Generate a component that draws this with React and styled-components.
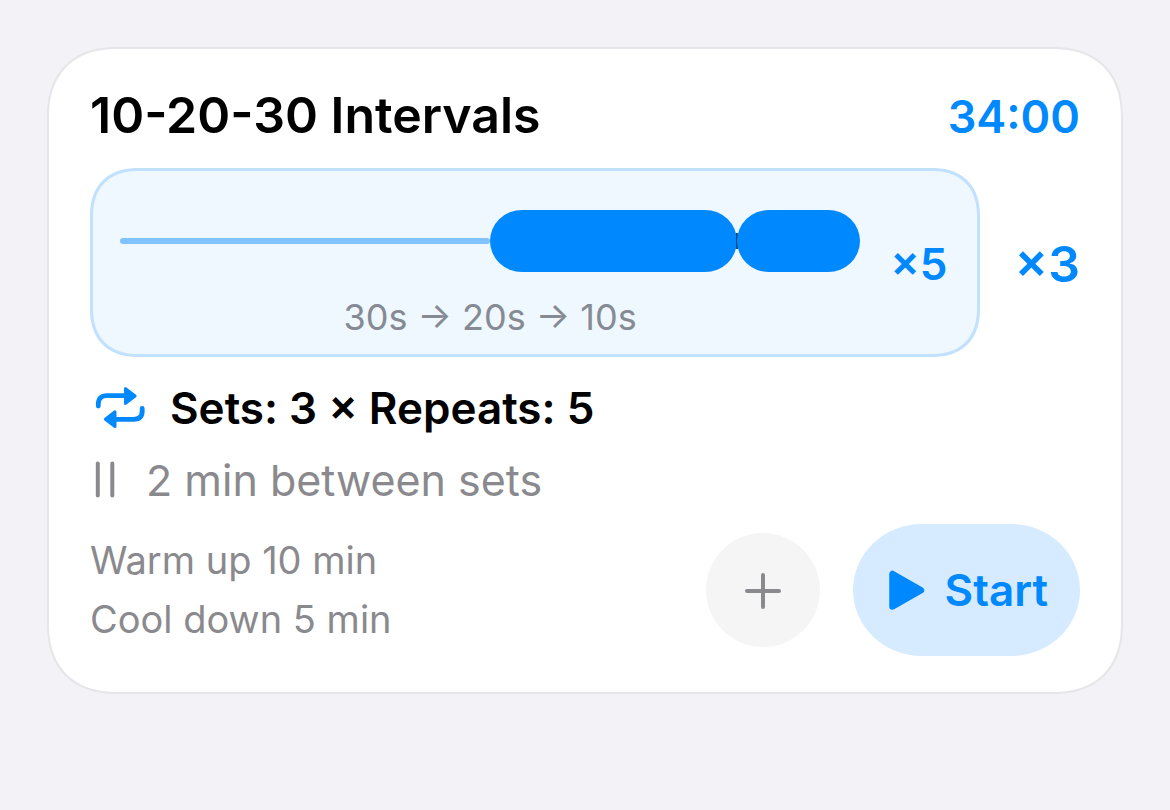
import React from "react";
import styled, { createGlobalStyle } from "styled-components";

const blue = "#0088ff";
const gray = "#8a8a8e";

const GlobalStyle = createGlobalStyle`
  *, *::before, *::after { box-sizing: border-box; }
  body {
    margin: 0;
    background: #f2f2f7;
    font-family: Inter, "Liberation Sans", sans-serif;
    color: #000;
  }
`;

const Page = styled.main`
  padding: 47px;
`;

const Card = styled.article`
  display: flex;
  flex-direction: column;
  padding: 34px 41px 36px;
  background: #fff;
  border: 2px solid #e6e6ea;
  border-radius: 70px;
  corner-shape: superellipse(1.2);
`;

const Header = styled.header`
  display: flex;
  justify-content: space-between;
  align-items: baseline;
  line-height: 64px;
`;

const Title = styled.h1`
  margin: 0;
  font-size: 50px;
  font-weight: 600;
`;

const Duration = styled.time`
  color: ${blue};
  font-size: 45px;
  font-weight: 600;
`;

const SetRow = styled.section`
  display: flex;
  align-items: center;
  gap: 35px;
  margin-top: 19px;
`;

const Panel = styled.div`
  flex: 1;
  display: flex;
  align-items: center;
  gap: 30px;
  padding: 0 29px 0 27px;
  background: #eff7ff;
  border: 3px solid #c2e1ff;
  border-radius: 48px;
  corner-shape: superellipse(1.2);
`;

const Graph = styled.div`
  flex: 1;
  display: flex;
  flex-direction: column;
  gap: 24px;
  padding: 39px 0 16px;
`;

const Bars = styled.div`
  display: flex;
  align-items: center;
  height: 62px;
`;

const RestLine = styled.div`
  flex: ${(p) => p.$share};
  height: 6px;
  border-radius: 3px;
  background: #80c3ff;
`;

const WorkBar = styled.div`
  flex: ${(p) => p.$share};
  height: 62px;
  border-radius: 32px / 31px;
  background: ${blue};
`;

const Divider = styled.div`
  width: 2px;
  height: 16px;
  margin: 0 -1px;
  background: #124a7d;
`;

const Caption = styled.p`
  margin: 0;
  color: #868a93;
  font-size: 36px;
  line-height: 42px;
  text-align: center;
`;

const Multiplier = styled.span`
  padding-top: 2px;
  color: ${blue};
  font-size: ${(p) => (p.$large ? 50 : 44)}px;
  font-weight: 600;
  line-height: 56px;
`;

const Details = styled.div`
  display: flex;
  flex-direction: column;
  gap: 16px;
  margin-top: 23px;
`;

const Detail = styled.p`
  display: flex;
  align-items: center;
  gap: ${(p) => (p.$muted ? 26 : 20)}px;
  margin: 0;
  font-size: ${(p) => (p.$muted ? 43 : 44)}px;
  line-height: 56px;
  font-weight: ${(p) => (p.$muted ? 400 : 600)};
  color: ${(p) => (p.$muted ? gray : "#000")};
`;

const Footer = styled.footer`
  display: flex;
  align-items: center;
  gap: 33px;
  margin-top: 16px;
`;

const Notes = styled.div`
  flex: 1;
  display: flex;
  flex-direction: column;
  gap: 12px;
  color: ${gray};
  font-size: 38px;
  line-height: 47px;
`;

const Note = styled.p`
  margin: 0;
`;

const Button = styled.button`
  display: flex;
  align-items: center;
  justify-content: center;
  border: 0;
  font: inherit;
  cursor: pointer;
`;

const AddButton = styled(Button)`
  width: 114px;
  height: 114px;
  padding: 0;
  border-radius: 50%;
  background: #f5f5f5;
`;

const StartButton = styled(Button)`
  height: 132px;
  gap: 20px;
  padding: 0 32px 0 36px;
  border-radius: 69px / 66px;
  background: #d6ebff;
  color: ${blue};
  font-size: 44px;
  font-weight: 600;
`;

const RepeatIcon = () => (
  <svg width="60" height="56" viewBox="0 0 60 56" aria-hidden="true">
    <g fill="none" stroke={blue} strokeWidth="4.8" strokeLinecap="round">
      <path d="M8.300 26v-2c0-5.500 3.200-8.300 8.600-8.300H36" />
      <path d="M52.200 28.500v2.500c0 5.500-3.200 8.300-8.600 8.300H24" />
    </g>
    <g fill={blue} stroke={blue} strokeWidth="3" strokeLinejoin="round">
      <path d="M35.500 8.600v14.800l9.600-7.400z" />
      <path d="M25 31.800v14.800l-9.600-7.400z" />
    </g>
  </svg>
);

const PauseIcon = () => (
  <svg width="30" height="56" viewBox="0 0 30 56" aria-hidden="true">
    <path d="M7.800 11.500v32M22.300 11.500v32" stroke={gray} strokeWidth="4" strokeLinecap="round" />
  </svg>
);

const PlusIcon = () => (
  <svg width="38" height="38" viewBox="0 0 38 38" aria-hidden="true">
    <path d="M3 20h32M19 4v32" stroke={gray} strokeWidth="4" strokeLinecap="round" />
  </svg>
);

const PlayIcon = () => (
  <svg width="36" height="40" viewBox="0 0 36 40" aria-hidden="true">
    <path
      d="M3.500 4v32.500L32 20.250z"
      fill={blue}
      stroke={blue}
      strokeWidth="6.500"
      strokeLinejoin="round"
    />
  </svg>
);

export default function App() {
  return (
    <>
      <GlobalStyle />
      <Page>
        <Card>
          <Header>
            <Title>10-20-30 Intervals</Title>
            <Duration>34:00</Duration>
          </Header>
          <SetRow>
            <Panel>
              <Graph>
                <Bars>
                  <RestLine $share={3} />
                  <WorkBar $share={2} />
                  <Divider />
                  <WorkBar $share={1} />
                </Bars>
                <Caption>30s → 20s → 10s</Caption>
              </Graph>
              <Multiplier>×5</Multiplier>
            </Panel>
            <Multiplier $large>×3</Multiplier>
          </SetRow>
          <Details>
            <Detail>
              <RepeatIcon />
              Sets: 3 × Repeats: 5
            </Detail>
            <Detail $muted>
              <PauseIcon />2 min between sets
            </Detail>
          </Details>
          <Footer>
            <Notes>
              <Note>Warm up 10 min</Note>
              <Note>Cool down 5 min</Note>
            </Notes>
            <AddButton type="button" aria-label="Add">
              <PlusIcon />
            </AddButton>
            <StartButton type="button">
              <PlayIcon />
              Start
            </StartButton>
          </Footer>
        </Card>
      </Page>
    </>
  );
}
